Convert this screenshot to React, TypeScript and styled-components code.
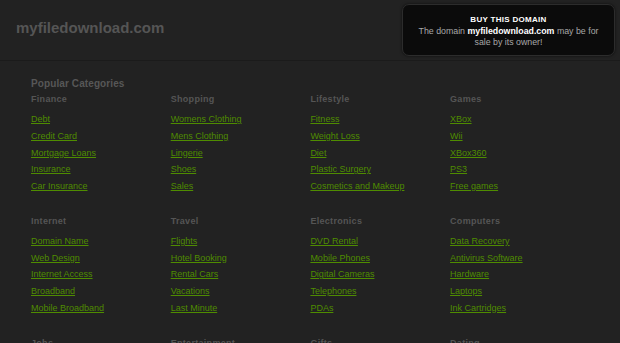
import React from "react";
import styled, { createGlobalStyle } from "styled-components";

const GlobalStyle = createGlobalStyle`
  html, body {
    margin: 0;
    padding: 0;
    background: #222222;
  }
  body {
    font-family: "Liberation Sans", Arial, sans-serif;
  }
`;

const groups: { title: string; links: string[] }[] = [
  { title: "Finance", links: ["Debt", "Credit Card", "Mortgage Loans", "Insurance", "Car Insurance"] },
  { title: "Shopping", links: ["Womens Clothing", "Mens Clothing", "Lingerie", "Shoes", "Sales"] },
  { title: "Lifestyle", links: ["Fitness", "Weight Loss", "Diet", "Plastic Surgery", "Cosmetics and Makeup"] },
  { title: "Games", links: ["XBox", "Wii", "XBox360", "PS3", "Free games"] },
  { title: "Internet", links: ["Domain Name", "Web Design", "Internet Access", "Broadband", "Mobile Broadband"] },
  { title: "Travel", links: ["Flights", "Hotel Booking", "Rental Cars", "Vacations", "Last Minute"] },
  { title: "Electronics", links: ["DVD Rental", "Mobile Phones", "Digital Cameras", "Telephones", "PDAs"] },
  { title: "Computers", links: ["Data Recovery", "Antivirus Software", "Hardware", "Laptops", "Ink Cartridges"] },
  { title: "Jobs", links: ["Job Search", "Resume", "Part Time Jobs", "Career", "Employment"] },
  { title: "Entertainment", links: ["Movies", "Music", "Concerts", "Tickets", "Celebrities"] },
  { title: "Gifts", links: ["Flowers", "Gift Baskets", "Jewelry", "Toys", "Chocolate"] },
  { title: "Dating", links: ["Online Dating", "Singles", "Chat", "Romance", "Personals"] },
];

export default function App() {
  return (
    <>
      <GlobalStyle />
      <Page>
        <Header>
          <Logo>myfiledownload.com</Logo>
          <BuyBox>
            <BuyTitle>BUY THIS DOMAIN</BuyTitle>
            <BuyText>
              The domain <strong>myfiledownload.com</strong> may be for
              <br />
              sale by its owner!
            </BuyText>
          </BuyBox>
        </Header>

        <Content>
          <SectionTitle>Popular Categories</SectionTitle>
          <Grid>
            {groups.map((g) => (
              <Group key={g.title}>
                <GroupTitle>{g.title}</GroupTitle>
                <LinkList>
                  {g.links.map((l) => (
                    <li key={l}>
                      <CatLink href="#">{l}</CatLink>
                    </li>
                  ))}
                </LinkList>
              </Group>
            ))}
          </Grid>
        </Content>
      </Page>
    </>
  );
}

const Page = styled.div`
  background: #222222;
  min-height: 100vh;
`;

const Header = styled.div`
  position: relative;
  height: 60px;
  display: flex;
  align-items: center;
  padding-left: 16px;
  border-bottom: 1px solid #1b1b1b;
`;

const Logo = styled.div`
  font-size: 15px;
  font-weight: bold;
  color: #555555;
  margin-top: -6px;
`;

const BuyBox = styled.div`
  position: absolute;
  top: 4px;
  right: 5px;
  width: 213px;
  height: 52px;
  box-sizing: border-box;
  padding-top: 9px;
  background: #0b0b0b;
  border: 1px solid #2c2c2c;
  border-radius: 7px;
  box-shadow: 0 0 3px rgba(0, 0, 0, 0.6);
  text-align: center;
`;

const BuyTitle = styled.div`
  font-size: 8px;
  font-weight: bold;
  color: #ffffff;
  line-height: 11px;
  letter-spacing: 0.3px;
  margin-bottom: 1px;
`;

const BuyText = styled.div`
  font-size: 8.8px;
  line-height: 11px;
  color: #a8a8a8;

  strong {
    color: #ffffff;
  }
`;

const Content = styled.div`
  padding: 17px 0 0 31px;
`;

const SectionTitle = styled.div`
  font-size: 10px;
  font-weight: bold;
  color: #575757;
  line-height: 12px;
  letter-spacing: 0.1px;
  margin-bottom: 3px;
`;

const Grid = styled.div`
  display: grid;
  grid-template-columns: repeat(4, 139.7px);
  row-gap: 22px;
`;

const Group = styled.div`
  display: flex;
  flex-direction: column;
`;

const GroupTitle = styled.div`
  font-size: 9px;
  font-weight: bold;
  color: #555555;
  line-height: 12px;
  letter-spacing: 0.3px;
  margin-bottom: 4px;
`;

const LinkList = styled.ul`
  list-style: none;
  margin: 0;
  padding: 0;

  li {
    line-height: 16.75px;
    height: 16.75px;
  }
`;

const CatLink = styled.a`
  font-size: 9px;
  color: #4f8c00;
  text-decoration: underline;
`;
